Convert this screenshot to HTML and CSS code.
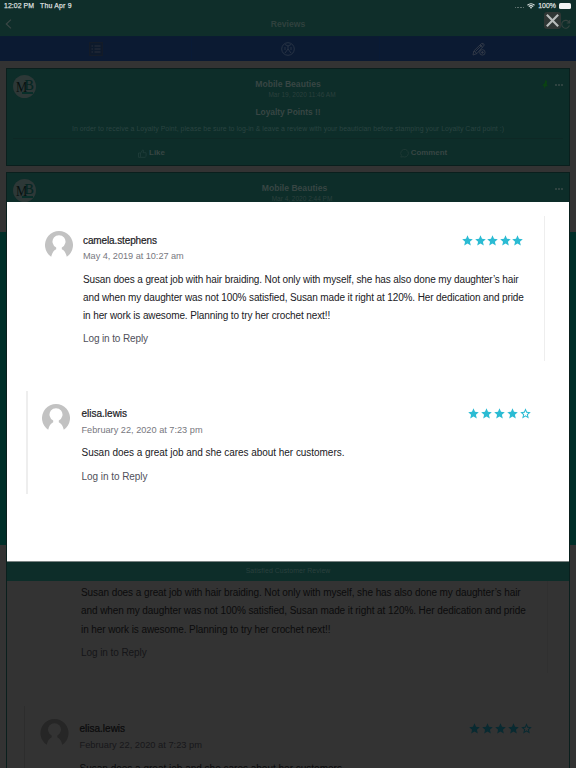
FILE: index.html
```html
<!DOCTYPE html>
<html lang="en">
<head>
<meta charset="utf-8">
<title>Reviews</title>
<link rel="stylesheet" href="styles.css">
</head>
<body>
<svg width="0" height="0" class="defs">
  <symbol id="star" viewBox="0 0 24 24"><path d="M12 .8l3.300 7.500 8.200.8-6.200 5.400 1.900 8.200L12 18.400 4.800 22.700l1.900-8.200L.5 9.100l8.200-.8z"/></symbol>
  <symbol id="star-o" viewBox="0 0 24 24"><path fill-rule="evenodd" d="M12 .8l3.300 7.500 8.200.8-6.200 5.400 1.900 8.200L12 18.400 4.800 22.700l1.900-8.200L.5 9.100l8.200-.8zM12 6l-1.700 4.400-4.700.4 3.600 3-1.100 4.500L12 15.900l3.900 2.400-1.100-4.500 3.600-3-4.700-.4z"/></symbol>
  <symbol id="person" viewBox="0 0 28 26"><path fill-rule="evenodd" d="M6.200 25.700A14 14 0 1 1 21.800 25.700C20.800 22 19.500 19.500 16.800 18.300V16.500A6.500 6.500 0 1 0 11.200 16.500V18.300C8.500 19.500 7.200 22 6.200 25.700Z"/></symbol>
</svg>
<div class="screen">
  <div class="status">
    <span>12:02 PM</span><span class="date">Thu Apr 9</span>
    <div class="status-right">
      <span class="signal"><i></i><i></i><i></i><i></i></span>
      <svg class="wifi" viewBox="0 0 16 12"><g fill="none" stroke="#dfe5e4" stroke-width="2.200"><path d="M1 4.500Q8-1.700 15 4.500"/><path d="M3.600 7.200Q8 3.200 12.400 7.200"/></g><path fill="#dfe5e4" d="M5.500 9Q8 7 10.500 9L8 11.700z"/></svg>
      <span>100%</span><span class="battery"></span>
    </div>
  </div>
  <header class="bar">
    <svg class="back" viewBox="0 0 8 12"><path d="M6.800 1L1.500 6l5.300 5" fill="none" stroke="#3a4745" stroke-width="1.400"/></svg>
    <h1>Reviews</h1>
    <svg class="reload" viewBox="0 0 12 12"><path d="M10 3.800A4.300 4.300 0 1 0 10.300 7M10.600 1v3.300H7.300" fill="none" stroke="#35423f" stroke-width="1.200"/></svg>
  </header>
  <nav class="tabs">
    <div class="tab"><svg width="14" height="14" viewBox="0 0 14 14" fill="none" stroke="#141c28" stroke-width="1.300"><path fill="#0d1a2c" d="M.7 .7h12.600v12.600H.7z"/><path d="M2.500 4h1.500M5.500 4h6M2.500 7h1.500M5.500 7h6M2.500 10h1.500M5.500 10h6" stroke="#202936"/></svg></div>
    <div class="tab"><svg width="14" height="14" viewBox="0 0 14 14" fill="none" stroke="#303a4a" stroke-width=".8"><circle cx="7" cy="7" r="6.300"/><path d="M4 2.500L7 4l3-1.500M7 4v3L4 11M7 7l3 4M4 5v3M10 5v3"/></svg></div>
    <div class="tab"><svg width="14" height="14" viewBox="0 0 14 14" fill="none" stroke="#333b48" stroke-width=".9"><path d="M1 13l.8-4L9.500 1.500q2-1 2.800 1.500L5 11.500zM2 9l2.800 2.500M3.500 9.500l7-7M8 3l2.800 2.500"/><circle cx="10.400" cy="10.400" r="2.700"/><path d="M9 10.400h2.800M10.400 9v2.800"/></svg></div>
  </nav>
  <main class="feed">
    <section class="card first">
      <div class="logo"><span>M</span><b>B</b><i></i></div>
      <svg class="pin" viewBox="0 0 6 9"><path d="M3.500 0L5 1 4.700 4 5.800 6.300 3.700 6.300 2 9 2 6.300 .3 5.500 2.700 3z" fill="#0a4212"/></svg>
      <span class="more"><i></i><i></i><i></i></span>
      <h2>Mobile Beauties</h2>
      <p class="when">Mar 19, 2020 11:46 AM</p>
      <h3>Loyalty Points !!</h3>
      <p class="note">In order to receive a Loyalty Point, please be sure to log-in &amp; leave a review with your beautician before stamping your Loyalty Card point :)</p>
      <div class="actions">
        <div class="like"><svg width="9" height="9" viewBox="0 0 9 9"><path d="M.5 4h2v4.300h-2zM2.500 4.300L4.800.7l.8.7-.5 2.300h3v3.800l-1 .8H2.500" fill="none" stroke="#24413d" stroke-width=".7"/></svg>Like</div>
        <div class="comment"><svg width="9" height="9" viewBox="0 0 9 9"><path d="M.8 8.200l.5-2A3.800 3.800 0 1 1 3 7.700z" fill="none" stroke="#253e3a" stroke-width=".7"/></svg>Comment</div>
      </div>
    </section>
    <section class="card second">
      <div class="post">
        <div class="logo"><span>M</span><b>B</b><i></i></div>
        <span class="more"><i></i><i></i><i></i></span>
        <h2>Mobile Beauties</h2>
        <p class="when">Mar 4, 2020 2:44 PM</p>
        <p class="caption">Satisfied Customer Review</p>
      </div>
      <div class="photo">
        <article class="review under-a">
          <div class="body">
            <p class="text">Susan does a great job with hair braiding. Not only with myself, she has also done my daughter’s hair<br>and when my daughter was not 100% satisfied, Susan made it right at 120%. Her dedication and pride<br>in her work is awesome. Planning to try her crochet next!!</p>
            <p class="reply">Log in to Reply</p>
          </div>
        </article>
        <article class="review under-b">
          <svg class="avatar"><use href="#person"/></svg>
          <div class="body">
            <div class="top"><strong>elisa.lewis</strong><span class="stars"><svg><use href="#star"/></svg><svg><use href="#star"/></svg><svg><use href="#star"/></svg><svg><use href="#star"/></svg><svg><use href="#star-o"/></svg></span></div>
            <p class="stamp">February 22, 2020 at 7:23 pm</p>
            <p class="text">Susan does a great job and she cares about her customers.</p>
          </div>
        </article>
      </div>
    </section>
  </main>
  <button class="close" aria-label="Close"><svg viewBox="0 0 18 18"><path d="M3 3l12 12M15 3L3 15" stroke="#b9bdbc" stroke-width="2.300"/></svg></button>
  <div class="viewer">
    <article class="review one">
      <svg class="avatar"><use href="#person"/></svg>
      <div class="body">
        <div class="top"><strong>camela.stephens</strong><span class="stars"><svg><use href="#star"/></svg><svg><use href="#star"/></svg><svg><use href="#star"/></svg><svg><use href="#star"/></svg><svg><use href="#star"/></svg></span></div>
        <p class="stamp">May 4, 2019 at 10:27 am</p>
        <p class="text">Susan does a great job with hair braiding. Not only with myself, she has also done my daughter’s hair<br>and when my daughter was not 100% satisfied, Susan made it right at 120%. Her dedication and pride<br>in her work is awesome. Planning to try her crochet next!!</p>
        <p class="reply">Log in to Reply</p>
      </div>
    </article>
    <article class="review two">
      <svg class="avatar"><use href="#person"/></svg>
      <div class="body">
        <div class="top"><strong>elisa.lewis</strong><span class="stars"><svg><use href="#star"/></svg><svg><use href="#star"/></svg><svg><use href="#star"/></svg><svg><use href="#star"/></svg><svg><use href="#star-o"/></svg></span></div>
        <p class="stamp">February 22, 2020 at 7:23 pm</p>
        <p class="text">Susan does a great job and she cares about her customers.</p>
        <p class="reply">Log in to Reply</p>
      </div>
    </article>
  </div>
</div>
</body>
</html>
```
FILE: styles.css
```css
* { box-sizing: border-box; margin: 0; padding: 0; }
body { width: 576px; height: 768px; overflow: hidden; font-family: "Liberation Sans", sans-serif; background: #333; }
.defs { position: absolute; }
.screen { position: relative; width: 576px; height: 768px; overflow: hidden; background: linear-gradient(#333 232px, #002f29 232px, #002f29 545px, #333 545px); }
.status { height: 12px; display: flex; align-items: center; padding: 0 4px; background: #0f2e2a; color: #d9dfde; font-size: 6.9px; font-weight: 400; -webkit-text-stroke: .25px; letter-spacing: .06px; line-height: 12px; }
.date { margin-left: 6px; letter-spacing: .2px; }
.status-right { margin-left: auto; display: flex; align-items: center; }
.signal { display: flex; gap: 1px; margin: 3px 3px 0 0; }
.signal i { width: 1.6px; height: 1.6px; background: #5d706d; }
.wifi { width: 8px; height: 6px; margin-right: 3px; }
.battery { width: 12px; height: 6px; margin: 0 1px 0 3px; border-radius: 1.500px; background: #f1f3f3; }
.bar { height: 24px; display: flex; align-items: center; justify-content: space-between; padding: 0 5px 0 5px; background: #0f2e2a; }
.bar h1 { font-size: 8.6px; color: #2f413e; padding-left: 4px; }
.back { width: 7px; height: 12px; }
.reload { width: 11px; height: 11px; }
.tabs { height: 25px; display: grid; grid-template-columns: 192px 188px 196px; background: #0b1a32; border-top: 1px solid #0a1c31; }
.tab { display: flex; align-items: center; justify-content: center; border-right: 1px solid #091a36; }
.tab:nth-child(2) { padding-left: 4px; }
.tab:nth-child(3) { padding-left: 3px; }
.feed { padding: 7px 6px 0; display: flex; flex-direction: column; gap: 6px; }
.card { position: relative; border: 1px solid #0a1f1d; text-align: center; color: #384644; }
.card h2 { font-size: 8.6px; line-height: 10px; }
.first { height: 98px; background: #0d2d29; padding: 10px 6px 0; }
.when { font-size: 6.5px; line-height: 8px; color: #2b403d; margin-top: 2px; white-space: nowrap; padding-left: 28px; }
.first h3 { font-size: 8.400px; line-height: 10px; margin-top: 8px; }
.note { font-size: 6.9px; letter-spacing: .06px; line-height: 8px; margin-top: 8px; height: 14px; color: #2b4441; white-space: nowrap; border-bottom: 1px solid #0e2825; }
.actions { display: grid; grid-template-columns: 1fr 1fr; font-size: 7.9px; font-weight: 700; line-height: 10px; padding-top: 9px; }
.like, .comment { display: flex; justify-content: center; align-items: center; gap: 2px; }
.like { padding-left: 2px; }
.comment { padding-right: 4px; }
.logo { position: absolute; left: 6px; top: 6px; width: 23px; height: 23px; border-radius: 50%; background: #2d3837; color: #07100f; font: 14px/23px "Liberation Serif", serif; }
.logo span { position: absolute; left: 2.500px; top: 1px; width: 11px; transform: scaleX(.9); transform-origin: left; }
.logo b { position: absolute; left: 11.500px; top: -1px; font-weight: 400; color: #042622; -webkit-text-stroke: .2px; }
.logo i { position: absolute; left: 9px; top: 17px; width: 11px; height: 1.500px; background: #082e29; }
.pin { position: absolute; right: 21px; top: 11px; width: 6px; height: 9px; }
.more { position: absolute; right: 6px; top: 15px; display: flex; gap: 1px; }
.more i { width: 2px; height: 2px; border-radius: 50%; background: #3a4b48; }
.second { height: 620px; }
.post { height: 408px; background: #0d2d29; padding-top: 10px; }
.post h2 { padding-left: 13px; }
.caption { font-size: 6.900px; letter-spacing: .08px; line-height: 8px; color: #2a403e; margin-top: 364px; }
.photo { background: #333; height: 212px; overflow: hidden; text-align: left; }
.close { position: absolute; left: 544px; top: 12px; width: 17px; height: 17px; border: 0; border-radius: 3px; background: #303735; }
.close svg { display: block; width: 17px; height: 17px; }
.viewer { position: absolute; left: 7px; top: 202px; width: 562px; height: 360px; background: #fff; border-bottom: 1px solid #798382; padding-top: 14px; display: flex; flex-direction: column; }
.review { display: flex; }
.avatar { flex: none; width: 28px; height: 26px; fill: #c2c2c2; }
.body { flex: 1; white-space: nowrap; }
.top { height: 12px; display: flex; align-items: center; justify-content: space-between; }
.top strong { font-size: 10px; font-weight: 400; color: #202024; -webkit-text-stroke: .2px; }
.stars { display: flex; fill: #2bbbd3; }
.stars svg { width: 11px; height: 11px; }
.stamp { font-size: 9.200px; line-height: 12px; color: #77777e; margin-top: 4px; }
.text { font-size: 10px; line-height: 18px; color: #202024; margin-top: 9px; }
.reply { font-size: 10px; line-height: 12px; color: #50505a; }
.one { width: 538px; height: 145px; border-right: 1px solid #eee; padding: 15px 21px 0 38px; }
.one .body { margin-left: 10px; padding-top: 3px; }
.one .top strong, .one .text, .one .reply { letter-spacing: -.12px; }
.one .stamp { letter-spacing: -.04px; }
.one .stars { gap: 1.500px; }
.one .body .top { width: 440px; }
.one .reply { margin-top: 8px; }
.two { height: 103px; margin: 30px 38.500px 0 19px; border-left: 2px solid #eee; padding: 13px 0 0 14px; }
.two .body { margin-left: 11.500px; padding-top: 3px; }
.two .stamp { margin-top: 5px; }
.two .text { margin-top: 8px; letter-spacing: -.04px; }
.two .reply { margin-top: 9px; letter-spacing: -.05px; }
.two .stars { gap: 1.900px; }
.under-a { padding: 3px 0 0 74px; height: 92px; width: 541px; border-right: 1px solid #303030; }
.under-a .text { margin-top: 0; line-height: 18.300px; letter-spacing: -.08px; color: #0b0b0c; }
.under-a .reply { margin-top: 8px; color: #151518; letter-spacing: -.07px; }
.under-b { width: 508px; height: 103px; margin: 33px 0 0 17px; border-left: 1px solid #2d2d2d; padding: 13px 0 0 15px; }
.under-b .avatar { fill: #262626; width: 29px; }
.under-b .body { margin-left: 10.500px; padding-top: 3px; }
.under-b strong, .under-b .text { color: #0a0a0b; }
.under-b .stamp { color: #17171a; margin-top: 5px; font-size: 9.300px; }
.under-b .stars { fill: #092a31; gap: 2px; }
```
